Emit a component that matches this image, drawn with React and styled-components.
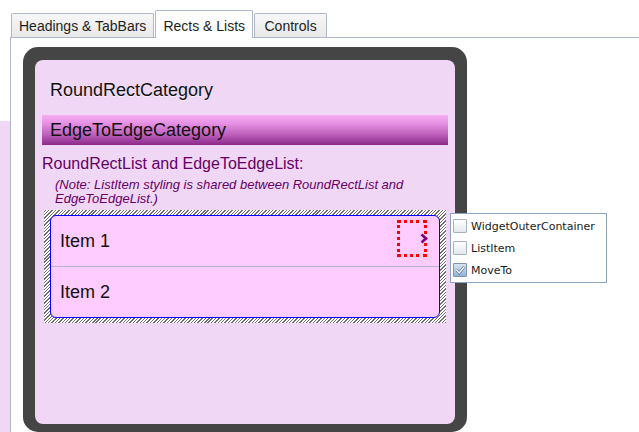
import React from 'react';
import styled, { createGlobalStyle } from 'styled-components';

/********** Styling **********/
const GlobalStyle = createGlobalStyle`
  html, body {
    margin: 0;
    padding: 0;
    background: #ffffff;
    font-family: "Liberation Sans", Arial, Helvetica, sans-serif;
  }
`
const lavender = '#efd7f5';
const lineColor = '#aeb8c8';

const Page = styled.div`
  position: relative;
  display: flex;
  width: 639px;
  height: 432px;
  overflow: hidden;
  background: #ffffff;
`
const SideStrip = styled.div`
  width: 10px;
  flex: none;
  background: linear-gradient(to bottom, #ffffff 121px, ${lavender} 121px);
`
const Main = styled.div`
  flex: 1;
  display: flex;
  flex-direction: column;
`
const TabBar = styled.div`
  box-sizing: border-box;
  height: 38px;
  display: flex;
  align-items: flex-end;
  gap: 1px;
  padding-left: 1px;
  border-bottom: 1px solid ${lineColor};
`
const Tab = styled.div`
  box-sizing: border-box;
  display: flex;
  align-items: flex-end;
  justify-content: center;
  min-width: 73px;
  height: ${({ $active }) => ($active ? '28px' : '24px')};
  margin-bottom: ${({ $active }) => ($active ? '-1px' : '0')};
  padding: 0 7px ${({ $active }) => ($active ? '4px' : '3px')};
  border: 1px solid ${lineColor};
  border-bottom: none;
  border-radius: 2px 2px 0 0;
  background: ${({ $active }) => ($active ? '#ffffff' : 'linear-gradient(#f7f7f7, #e8e8e8)')};
  color: #1e1e1e;
  font-size: 14px;
  line-height: 16px;
  white-space: nowrap;
`
const Pane = styled.div`
  flex: 1;
  border-left: 1px solid ${lineColor};
  padding: 9px 0 0 12px;
`
const Device = styled.div`
  box-sizing: border-box;
  width: 444px;
  height: 385px;
  padding: 13px 12px 8px;
  background: #454545;
  border-radius: 15px;
`
const Screen = styled.div`
  height: 100%;
  background: ${lavender};
  border-radius: 8px;
  overflow: hidden;
`
const RoundRectTitle = styled.div`
  padding: 20px 15px 0;
  font-size: 18px;
  line-height: 21px;
  color: #111;
  text-shadow: 0 1px 0 rgba(255, 255, 255, 0.6);
`
const EdgeBar = styled.div`
  margin: 14px 7px 0;
  height: 30px;
  padding-left: 8px;
  font-size: 18px;
  line-height: 30px;
  color: #111;
  background: linear-gradient(#f6aef4 0%, #e48ee2 30%, #bd5fbb 65%, #8c2a8a 100%);
`
const SubHeading = styled.div`
  margin-top: 10px;
  padding-left: 7px;
  font-size: 16px;
  line-height: 18px;
  color: #660066;
`
const Note = styled.div`
  margin-top: 5px;
  padding: 0 20px;
  font-size: 13px;
  line-height: 14px;
  font-style: italic;
  color: #660066;
`
const Hatch = styled.div`
  margin: 4px 9px 0;
  padding: 5px 6px;
  background: repeating-linear-gradient(-45deg, #707070 0px, #707070 1px, #ffffff 1px, #ffffff 2.4px);
`
const List = styled.div`
  border: 1px solid #0000ff;
  border-radius: 6px;
  background: #ffccff;
  overflow: hidden;
`
const Row = styled.div`
  height: 50px;
  display: flex;
  align-items: ${({ $withTarget }) => ($withTarget ? 'flex-start' : 'center')};
  justify-content: space-between;
  padding-left: 9px;
  border-top: ${({ $first }) => ($first ? 'none' : '1px solid #b4b4c6')};
  font-size: 18px;
  color: #111;
`
const RowLabel = styled.span`
  align-self: center;
`
const MoveTarget = styled.div`
  box-sizing: border-box;
  width: 30px;
  height: 37px;
  margin: 4px 12px 0 0;
  border: 3px dotted #ff0000;
  display: flex;
  align-items: center;
  justify-content: flex-end;

  svg {
    margin-right: -4px;
  }
`
const Popup = styled.div`
  position: absolute;
  left: 450px;
  top: 213px;
  box-sizing: border-box;
  width: 157px;
  height: 70px;
  padding: 1px 2px;
  background: #ffffff;
  border: 1px solid #8fa4c0;
`
const CheckRow = styled.label`
  display: flex;
  align-items: center;
  gap: 4px;
  height: 22px;
  font-family: "DejaVu Sans", Verdana, sans-serif;
  font-size: 11px;
  color: #1a1a1a;
`
const Box = styled.span`
  box-sizing: border-box;
  width: 14px;
  height: 14px;
  flex: none;
  display: flex;
  align-items: center;
  justify-content: center;
  border: 1px solid ${({ $checked }) => ($checked ? '#7f93ad' : '#a9b1bd')};
  border-radius: 1px;
  background: ${({ $checked }) => ($checked ? 'linear-gradient(#d6e4f2, #94b4d6)' : 'linear-gradient(#ffffff, #e3e7ed)')};
`

/********** Icons **********/
const Chevron = () => (
  <svg width="8" height="11" viewBox="0 0 8 11">
    <path d="M1.5 1.5 L6 5.5 L1.5 9.5" fill="none" stroke="#800080" strokeWidth="2.6" />
  </svg>
)

const Tick = () => (
  <svg width="11" height="10" viewBox="0 0 11 10">
    <path d="M1.5 5 L4.2 8 L9.5 1.5" fill="none" stroke="#4b5f78" strokeWidth="2.6" />
    <path d="M1.5 5 L4.2 8 L9.5 1.5" fill="none" stroke="#ffffff" strokeWidth="1.4" />
  </svg>
)

/********** App Component **********/
const options = [
  { label: 'WidgetOuterContainer', checked: false },
  { label: 'ListItem', checked: false },
  { label: 'MoveTo', checked: true },
]

const App = () => {
  return (
    <>
      <GlobalStyle />
      <Page>
        <SideStrip />
        <Main>
          <TabBar>
            <Tab>Headings &amp; TabBars</Tab>
            <Tab $active>Rects &amp; Lists</Tab>
            <Tab>Controls</Tab>
          </TabBar>
          <Pane>
            <Device>
              <Screen>
                <RoundRectTitle>RoundRectCategory</RoundRectTitle>
                <EdgeBar>EdgeToEdgeCategory</EdgeBar>
                <SubHeading>RoundRectList and EdgeToEdgeList:</SubHeading>
                <Note>(Note: ListItem styling is shared between RoundRectList and EdgeToEdgeList.)</Note>
                <Hatch>
                  <List>
                    <Row $first $withTarget>
                      <RowLabel>Item 1</RowLabel>
                      <MoveTarget><Chevron /></MoveTarget>
                    </Row>
                    <Row>
                      <RowLabel>Item 2</RowLabel>
                    </Row>
                  </List>
                </Hatch>
              </Screen>
            </Device>
          </Pane>
        </Main>
        <Popup>
          {options.map((o) => (
            <CheckRow key={o.label}>
              <Box $checked={o.checked}>{o.checked && <Tick />}</Box>
              {o.label}
            </CheckRow>
          ))}
        </Popup>
      </Page>
    </>
  )
}

export default App
